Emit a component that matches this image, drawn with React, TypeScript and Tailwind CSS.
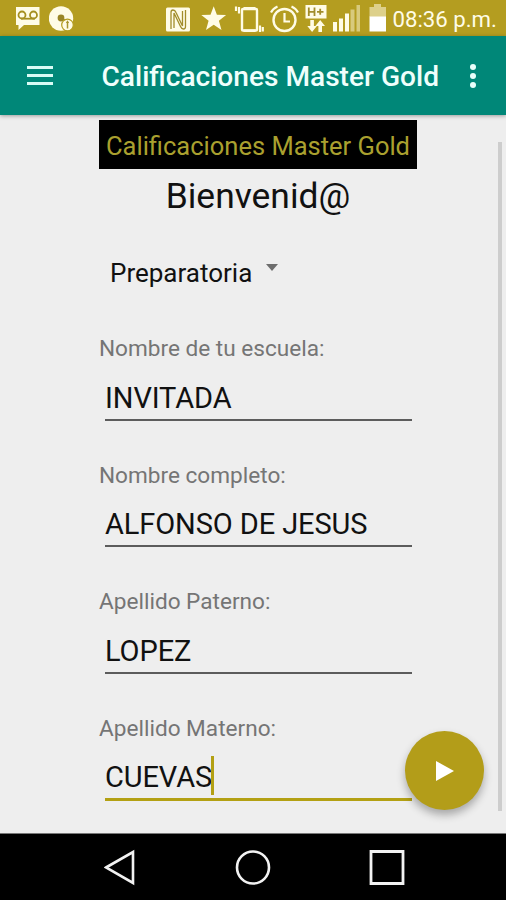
import type { ReactNode } from "react";

function Glyph({ box, className, children }: { box: string; className: string; children: ReactNode }) {
  return (
    <svg viewBox={box} className={`h-9 shrink-0 ${className}`} fill="#fffce6" aria-hidden="true">
      {children}
    </svg>
  );
}

function StatusBar() {
  return (
    <header className="flex h-9 shrink-0 items-center bg-[#b49d20] pl-4">
      <Glyph box="16 0 24 36" className="w-6">
        <path d="M16 7h23.5v18H24l-5.5 5v-5H16z" />
        <g fill="none" stroke="#a58f20" strokeWidth="1.8">
          <circle cx="22" cy="15" r="3.5" />
          <circle cx="33.5" cy="15" r="3.5" />
          <path d="M21 18.7h14" />
        </g>
      </Glyph>
      <Glyph box="49 0 25 36" className="ml-[9px] w-[25px]">
        <circle cx="61" cy="18.5" r="12.2" />
        <circle cx="61" cy="18" r="3.4" fill="#9a8626" />
        <path d="M61 18l4 2.500" stroke="#9a8626" strokeWidth="2" />
        <circle cx="67.500" cy="25" r="5.800" stroke="#b49d20" strokeWidth="1.200" />
        <path d="M67.500 28.500v-7M66.500 23.200l1-1.500 1 1.500" fill="none" stroke="#a8942c" strokeWidth="1.500" />
      </Glyph>
      <Glyph box="165 0 25 36" className="ml-[91px] w-[25px]">
        <rect x="166" y="7.500" width="24" height="24" rx="1.500" />
        <path
          d="M171 29V12.500q0-2.500 2-2.500t3 2.500l6.500 13.500V11M185.500 10v16.500q0 2.500-2 2.500t-3-2.500L174 13v15"
          fill="none"
          stroke="#a28d2b"
          strokeWidth="1.300"
        />
      </Glyph>
      <Glyph box="201 0 26 36" className="ml-[11px] w-[26px]">
        <path d="M213.700 6.300l3.200 8.400 9.200.3-7.200 5.800 2.600 9.200-7.800-5.200-7.700 5.200 2.600-9.200-7.300-5.800 9.200-.3z" />
      </Glyph>
      <Glyph box="234 0 30 36" className="ml-[7px] w-[30px]">
        <rect x="242" y="9" width="15" height="21.500" rx="1" fill="none" stroke="#fffce6" strokeWidth="2.400" />
        <path d="M243.500 7h12v3h-12zM243.500 29.500h12v2.500h-12z" />
        <path
          d="M239 7v6.500M236 6.500v4.500M260 25.500V32M262.800 27v4.500"
          fill="none"
          stroke="#fffce6"
          strokeWidth="2.200"
        />
      </Glyph>
      <Glyph box="270 0 29 36" className="ml-[6px] w-[29px]">
        <circle cx="284.500" cy="20" r="11" fill="none" stroke="#fffce6" strokeWidth="2.400" />
        <path
          d="M284.500 13v8.500h5.500M271 12.500q2-4 6.500-6M298 12.500q-2-4-6.500-6"
          fill="none"
          stroke="#fffce6"
          strokeWidth="2.200"
        />
      </Glyph>
      <Glyph box="305 0 22 36" className="ml-[6px] w-[22px]">
        <rect x="305.500" y="5" width="21" height="13.500" />
        <path
          d="M308.800 7.500v8.500M314.500 7.500v8.500M308.800 11.800h5.700M317 11.800h6.500M320.200 8.800v6"
          fill="none"
          stroke="#a28d2b"
          strokeWidth="1.800"
        />
        <path d="M310.300 20v6h-3l4.800 6 4.800-6h-3v-6zM318.400 32v-6h-3l4.800-6 4.800 6h-3v6z" />
      </Glyph>
      <Glyph box="333 0 27 36" className="ml-[6px] w-[27px]">
        <path d="M333 22h4v9.500h-4zM339 18.500h4v13h-4zM345 13.500h4v18h-4z" />
        <path d="M350.500 9.500h4v22h-4zM356.500 5h3.500v26.500h-3.500z" fill="#d8ca7c" />
      </Glyph>
      <Glyph box="370 0 18 36" className="ml-[9px] w-[18px]">
        <path d="M375 4h7v3h5v10h-16.500V7h4.500z" fill="#ddd08a" />
        <path d="M370.500 16.500H387v15h-16.500z" fill="#fff" />
      </Glyph>
      <span className="ml-[5.500px] pt-px text-[22.200px] leading-9 whitespace-nowrap text-[#fffce6]">08:36 p.m.</span>
    </header>
  );
}

function AppBar() {
  return (
    <div className="z-10 flex h-[79px] shrink-0 items-center bg-[#008778] pl-[27px] shadow-[0_1px_4px_rgba(0,0,0,0.35)]">
      <button aria-label="Menú" className="flex w-[26px] flex-col gap-[5px]">
        <span className="h-[3px] bg-[#d8fbf5]" />
        <span className="h-[3px] bg-[#d8fbf5]" />
        <span className="h-[3px] bg-[#d8fbf5]" />
      </button>
      <h1 className="ml-[48.500px] w-[339.500px] pt-[2px] text-[28.100px] leading-8 font-medium whitespace-nowrap text-[#effffc]">
        Calificaciones Master Gold
      </h1>
      <button aria-label="Más opciones" className="ml-[29px] flex flex-col gap-[3px]">
        <span className="size-[6px] rounded-full bg-[#e8fffb]" />
        <span className="size-[6px] rounded-full bg-[#e8fffb]" />
        <span className="size-[6px] rounded-full bg-[#e8fffb]" />
      </button>
    </div>
  );
}

const fields = [
  { label: "Nombre de tu escuela:", value: "INVITADA", active: false },
  { label: "Nombre completo:", value: "ALFONSO DE JESUS", active: false },
  { label: "Apellido Paterno:", value: "LOPEZ", active: false },
  { label: "Apellido Materno:", value: "CUEVAS", active: true },
];

function Field({ label, value, active }: { label: string; value: string; active: boolean }) {
  return (
    <div className="h-[126.500px]">
      <div className="h-[31px] pt-px text-[22.600px] leading-[30px] whitespace-nowrap text-[#757575]">{label}</div>
      <div
        className={`mr-[5px] ml-[6px] mt-[9.500px] flex items-center text-[29px] whitespace-nowrap text-[#111] ${
          active ? "h-[48px] border-b-[3px] border-[#b3a013]" : "h-[47px] border-b-2 border-[#5c5c5c]"
        }`}
      >
        <span className="pt-[3px] leading-[38px] tracking-[-0.1px]">{value}</span>
        {active && <span className="-ml-px h-[39px] w-[2.500px] bg-[#b3a013]" />}
      </div>
    </div>
  );
}

function NavBar() {
  return (
    <nav className="flex h-[67px] shrink-0 items-center border-t border-[#777] bg-black pl-[104px]">
      <svg viewBox="0 0 32 40" className="h-10 w-8" fill="none" stroke="#f2f2f2" strokeWidth="2.600">
        <path d="M2 20.500L29 5v31z" />
      </svg>
      <svg viewBox="0 0 40 40" className="ml-[97px] size-10" fill="none" stroke="#f2f2f2" strokeWidth="2.600">
        <circle cx="20" cy="20.500" r="16" />
      </svg>
      <svg viewBox="0 0 40 40" className="ml-[94px] size-10" fill="none" stroke="#f2f2f2" strokeWidth="2.800">
        <path d="M4 4.500h32v32H4z" />
      </svg>
    </nav>
  );
}

export default function App() {
  return (
    <div className="flex h-[900px] w-[506px] flex-col overflow-hidden bg-[#eeeeee] font-[Roboto,sans-serif]">
      <StatusBar />
      <AppBar />
      <main className="relative flex h-[718px] shrink-0 justify-between">
        <section className="ml-[99px] w-[318px] pt-[5px]">
          <div className="flex h-[49px] items-center justify-center bg-black pt-[3px] text-[25.500px] whitespace-nowrap text-[#aaa02f]">
            Calificaciones Master Gold
          </div>
          <h2 className="h-[54px] text-center text-[35.400px] leading-[54px] text-[#111]">Bienvenid@</h2>
          <div className="mt-[30px] flex h-[40px] items-center pl-[11px] text-[26px] text-[#111]">
            <span>Preparatoria</span>
            <svg viewBox="0 0 14 8" className="mb-[10px] ml-[13px] h-2 w-[14px]" fill="#6d6d6d">
              <path d="M1 0h12L7 7z" />
            </svg>
          </div>
          <div className="mt-[40px]">
            {fields.map((field) => (
              <Field key={field.label} {...field} />
            ))}
          </div>
        </section>
        <div className="mt-[27px] mr-1 h-[669px] w-[4px] bg-[#cdcdcd]" />
        <button
          aria-label="Continuar"
          className="absolute right-[22px] bottom-[23px] flex size-[79px] items-center justify-center rounded-full bg-[#b39d19] shadow-[0_5px_9px_rgba(0,0,0,0.3)]"
        >
          <svg viewBox="0 0 18 20" className="h-5 w-[18px]" fill="#fff">
            <path d="M0 0l18 10L0 20z" />
          </svg>
        </button>
      </main>
      <NavBar />
    </div>
  );
}
